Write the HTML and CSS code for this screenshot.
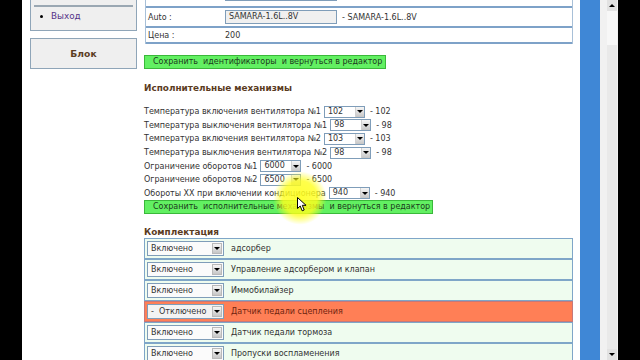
FILE: index.html
```html
<!DOCTYPE html>
<html lang="ru">
<head>
<meta charset="utf-8">
<title>Редактор</title>
<link rel="stylesheet" href="styles.css">
</head>
<body>
<div class="screen">
  <div class="edge"></div>
  <div class="page">
    <aside class="sidebar">
      <div class="box menu">
        <div class="menu-cut"></div>
        <div class="menu-divider"></div>
        <div class="menu-item"><span class="dot"></span><span class="menu-link">Выход</span></div>
      </div>
      <div class="box block-title">Блок</div>
    </aside>

    <main class="content">
      <div class="id-table">
        <div class="row row-top"><span class="lbl"></span><span class="val"><span class="inp"></span></span></div>
        <div class="row row-auto"><span class="lbl">Auto :</span><span class="val"><span class="inp">SAMARA-1.6L..8V</span><span class="after">- SAMARA-1.6L..8V</span></span></div>
        <div class="row row-price"><span class="lbl">Цена :</span><span class="val">200</span></div>
      </div>

      <div class="save-btn save-1">Сохранить  идентификаторы  и вернуться в редактор</div>

      <h2 class="sec">Исполнительные механизмы</h2>
      <div class="params">
        <div class="param"><span>Температура включения вентилятора №1</span><span class="sel"><span class="sel-v">102</span><span class="sel-a"></span></span><span>- 102</span></div>
        <div class="param"><span>Температура выключения вентилятора №1</span><span class="sel"><span class="sel-v">98</span><span class="sel-a"></span></span><span>- 98</span></div>
        <div class="param"><span>Температура включения вентилятора №2</span><span class="sel"><span class="sel-v">103</span><span class="sel-a"></span></span><span>- 103</span></div>
        <div class="param"><span>Температура выключения вентилятора №2</span><span class="sel"><span class="sel-v">98</span><span class="sel-a"></span></span><span>- 98</span></div>
        <div class="param"><span>Ограничение оборотов №1</span><span class="sel"><span class="sel-v">6000</span><span class="sel-a"></span></span><span>- 6000</span></div>
        <div class="param"><span>Ограничение оборотов №2</span><span class="sel"><span class="sel-v">6500</span><span class="sel-a"></span></span><span>- 6500</span></div>
        <div class="param"><span>Обороты XX при включении кондиционера</span><span class="sel"><span class="sel-v">940</span><span class="sel-a"></span></span><span>- 940</span></div>
      </div>
      <div class="save-btn save-2">Сохранить  исполнительные механизмы  и вернуться в редактор</div>

      <h2 class="sec kit-h">Комплектация</h2>
      <div class="kit">
        <div class="kit-row"><span class="sel sel-kit"><span class="sel-v">Включено</span><span class="sel-a"></span></span><span>адсорбер</span></div>
        <div class="kit-row"><span class="sel sel-kit"><span class="sel-v">Включено</span><span class="sel-a"></span></span><span>Управление адсорбером и клапан</span></div>
        <div class="kit-row"><span class="sel sel-kit"><span class="sel-v">Включено</span><span class="sel-a"></span></span><span>Иммобилайзер</span></div>
        <div class="kit-row off"><span class="sel sel-kit"><span class="sel-v">-  Отключено</span><span class="sel-a"></span></span><span>Датчик педали сцепления</span></div>
        <div class="kit-row"><span class="sel sel-kit"><span class="sel-v">Включено</span><span class="sel-a"></span></span><span>Датчик педали тормоза</span></div>
        <div class="kit-row"><span class="sel sel-kit"><span class="sel-v">Включено</span><span class="sel-a"></span></span><span>Пропуски воспламенения</span></div>
      </div>
    </main>

    <div class="glow"></div>
    <svg class="cursor" width="11" height="15" viewBox="0 0 11 15"><path d="M0.5 0.5 L0.5 11.5 L3.2 9 L5.2 13.8 L7.2 13 L5.3 8.3 L9 8.3 Z" fill="#fff" stroke="#000" stroke-width="1"/></svg>
  </div>
  <div class="blue-strip"></div>
  <div class="scrollbar">
    <div class="sb-btn up"></div>
    <div class="sb-thumb"></div>
    <div class="sb-track"></div>
    <div class="sb-btn down"></div>
  </div>
  <div class="edge"></div>
</div>
</body>
</html>
```

FILE: styles.css
```css
html, body {
  margin: 0;
  padding: 0;
  background: #000;
}

body {
  font-family: "DejaVu Sans", Verdana, sans-serif;
}

.screen {
  display: flex;
  width: 640px;
  height: 360px;
  overflow: hidden;
}

.edge {
  width: 22px;
  flex: none;
  background: #000;
}

.page {
  width: 558px;
  flex: none;
  box-sizing: border-box;
  padding: 0 7px 0 8px;
  background: #fff;
  display: flex;
  align-items: flex-start;
  gap: 7px;
  position: relative;
  overflow: hidden;
}

/* ---------- sidebar ---------- */
.sidebar {
  width: 107px;
  flex: none;
  display: flex;
  flex-direction: column;
  gap: 7px;
  margin-top: -20px;
}

.box {
  border: 1px solid #8fa5b8;
  background: #efefef;
  box-sizing: border-box;
}

.menu {
  height: 51px;
  padding: 4px 3px 0;
}

.menu-cut {
  height: 14px;
}

.menu-divider {
  margin-top: 6px;
  height: 2px;
  background: #9aa7b2;
}

.menu-item {
  margin-top: 1px;
  height: 16px;
  display: flex;
  align-items: center;
  font-size: 8.8px;
}

.dot {
  width: 3px;
  height: 3px;
  border-radius: 50%;
  background: #000;
  margin-left: 6px;
  margin-right: 8px;
}

.menu-link {
  color: #553388;
}

.block-title {
  height: 31px;
  display: flex;
  align-items: center;
  justify-content: center;
  font-weight: bold;
  font-size: 9.2px;
  color: #5b3c1f;
}

/* ---------- content ---------- */
.content {
  width: 429px;
  flex: none;
  margin-top: -13px;
  display: flex;
  flex-direction: column;
  align-items: flex-start;
  font-size: 8px;
  color: #333;
}

.id-table {
  width: 428px;
  margin-left: 1px;
  box-sizing: border-box;
  border-left: 1px solid #a8c0d8;
  border-right: 1px solid #a8c0d8;
}

.row {
  display: grid;
  grid-template-columns: 77px 1fr;
  align-items: center;
  box-sizing: border-box;
  border-bottom: 2px solid #7ea2c8;
  padding-left: 2px;
}

.row-top {
  height: 21px;
  align-items: start;
}

.row-auto {
  height: 20px;
}

.row-price {
  height: 16px;
}

.val {
  display: flex;
  align-items: center;
}

.inp {
  display: inline-block;
  width: 112px;
  height: 14px;
  box-sizing: border-box;
  border: 1px solid #7f9db9;
  background: #f0f0f0;
  padding-left: 3px;
  line-height: 12px;
}

.after {
  margin-left: 5px;
}

.save-btn {
  margin-top: 11px;
  height: 14px;
  line-height: 12px;
  box-sizing: border-box;
  padding-left: 8px;
  background: #62f062;
  border: 1px solid #3ab83a;
  color: #1c3a1c;
  white-space: pre;
}

.save-1 {
  width: 242px;
}

.save-2 {
  width: 289px;
  margin-top: 0;
}

.sec {
  margin: 12px 0 0;
  font-size: 8.9px;
  font-weight: bold;
  line-height: 14px;
  color: #5b3c1f;
}

.kit-h {
  line-height: 12px;
}

.params {
  margin-top: 10px;
  display: flex;
  flex-direction: column;
}

.param {
  height: 13.6px;
  display: flex;
  align-items: center;
  white-space: pre;
}

.sel {
  display: inline-flex;
  width: 41px;
  height: 12px;
  box-sizing: border-box;
  border: 1px solid #7f9db9;
  background: #fff;
  margin: 0 5px 0 3px;
}

.sel-v {
  flex: 1;
  padding-left: 3px;
  line-height: 10px;
  color: #333;
  white-space: pre;
}

.sel-a {
  width: 9px;
  flex: none;
  background: linear-gradient(#f6f6f6, #c6c6c6);
  border-left: 1px solid #d0d0d0;
  box-sizing: border-box;
  position: relative;
}

.sel-a::after {
  content: "";
  position: absolute;
  left: 50%;
  top: 50%;
  margin: -1.5px 0 0 -3px;
  border-left: 3px solid transparent;
  border-right: 3px solid transparent;
  border-top: 3px solid #000;
}

/* ---------- kit ---------- */
.kit {
  width: 429px;
  display: flex;
  flex-direction: column;
}

.kit-row {
  height: 21px;
  box-sizing: border-box;
  border: 1px solid #7fa6c8;
  background: #effcef;
  display: flex;
  align-items: center;
  gap: 7px;
  padding-left: 2px;
  color: #333;
}

.kit-row.off {
  background: #ff7f56;
  border-color: #c5787a;
  color: #6e2410;
}

.sel-kit {
  width: 77px;
  height: 15px;
  margin: 0;
  background: #fbfbfb;
}

.sel-kit .sel-v {
  line-height: 13px;
}

.sel-kit .sel-a {
  width: 10px;
  margin: 1px;
  border: 1px solid #b9b9b9;
}

.off .sel-kit {
  background: #f3f3f3;
}

/* ---------- overlay: cursor highlight ---------- */
.glow {
  position: absolute;
  left: 251px;
  top: 171px;
  width: 54px;
  height: 54px;
  border-radius: 50%;
  background: radial-gradient(circle, rgba(255, 255, 30, 0.9) 0%, rgba(255, 255, 30, 0.8) 45%, rgba(255, 255, 30, 0) 70%);
}

.cursor {
  position: absolute;
  left: 275px;
  top: 197px;
}

/* ---------- right chrome ---------- */
.blue-strip {
  width: 20px;
  flex: none;
  background: #3f87d6;
}

.scrollbar {
  width: 18px;
  flex: none;
  box-sizing: border-box;
  background: #f1f1f1;
  display: flex;
  flex-direction: column;
  align-items: flex-end;
  padding-right: 1px;
}

.sb-btn {
  width: 10px;
  height: 11px;
  flex: none;
  background: #e2e2e2;
  position: relative;
}

.sb-btn::after {
  content: "";
  position: absolute;
  left: 2px;
  top: 4px;
  border-left: 3px solid transparent;
  border-right: 3px solid transparent;
}

.sb-btn.up::after {
  border-bottom: 3px solid #000;
}

.sb-btn.down::after {
  border-top: 3px solid #000;
}

.sb-thumb {
  width: 10px;
  height: 34px;
  flex: none;
  background: #f7f7f7;
}

.sb-track {
  width: 10px;
  flex: 1;
  background: #e9e9e9;
}
```
